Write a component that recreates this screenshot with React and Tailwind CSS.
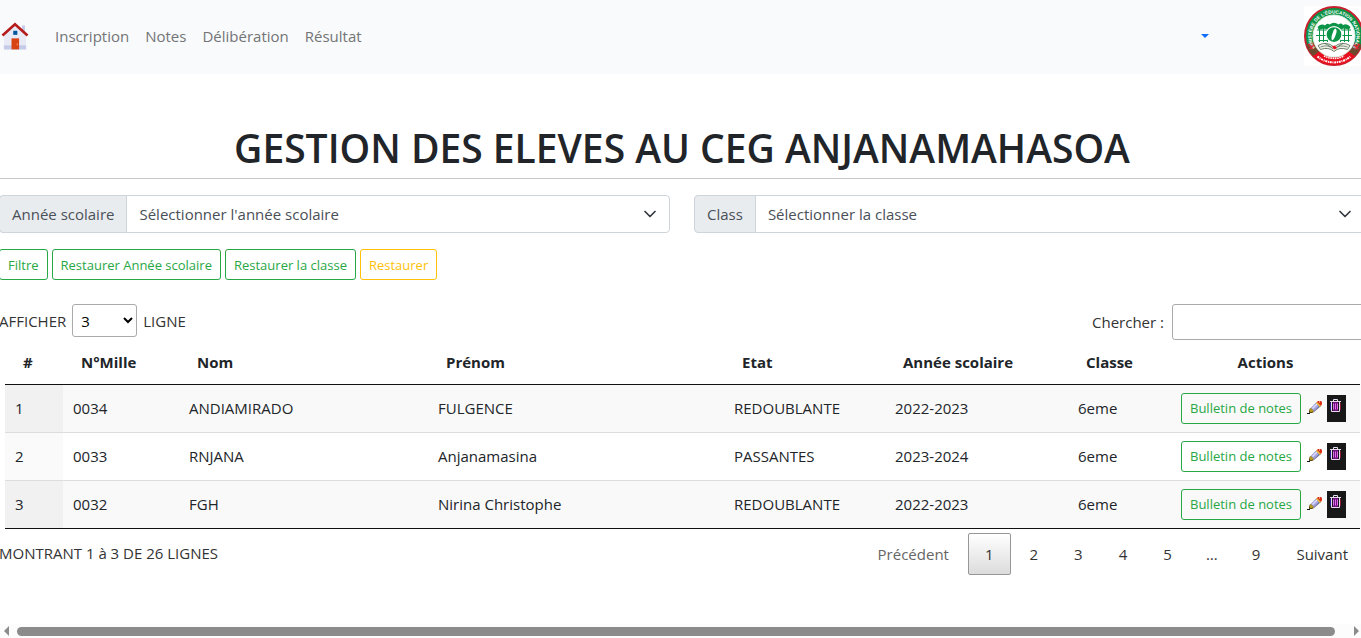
const students = [
  { id: 1, mille: "0034", nom: "ANDIAMIRADO", prenom: "FULGENCE", etat: "REDOUBLANTE", annee: "2022-2023", classe: "6eme" },
  { id: 2, mille: "0033", nom: "RNJANA", prenom: "Anjanamasina", etat: "PASSANTES", annee: "2023-2024", classe: "6eme" },
  { id: 3, mille: "0032", nom: "FGH", prenom: "Nirina Christophe", etat: "REDOUBLANTE", annee: "2022-2023", classe: "6eme" },
];

const navLinks = ["Inscription", "Notes", "Délibération", "Résultat"];
const headings = ["#", "N°Mille", "Nom", "Prénom", "Etat", "Année scolaire", "Classe"];

function HouseIcon() {
  return (
    <svg className="h-7 w-7" viewBox="0 0 48 48" aria-hidden="true">
      <path fill="#c5cae9" d="M36 6h5v14h-5z" />
      <path fill="#e8eaf6" d="M43 47H5V21L24 4l19 17z" />
      <path fill="#c5cae9" d="M5 40h38v7H5z" />
      <path fill="#b71c1c" d="M24 1 1 21.500l3 3.300L24 7l20 17.800 3-3.300z" />
      <path fill="#d84315" d="M18 28h13v19H18z" />
      <path fill="#01579b" d="M21 15h7v7h-7z" />
      <path fill="#ff8a65" d="M27 37h2v3h-2z" />
    </svg>
  );
}

function MinistryLogo() {
  return (
    <svg className="h-15 w-15 bg-white" viewBox="0 0 120 120" role="img" aria-label="Ministère de l'Éducation Nationale">
      <defs>
        <path id="ring" d="M60 105a45 45 0 0 1 0-90a45 45 0 0 1 0 90" />
      </defs>
      <circle cx="60" cy="60" r="58" fill="#0b9347" stroke="#c8202f" strokeWidth="4" />
      <path d="M4 77a58 58 0 0 0 14 23l13-10a43 43 0 0 1-11-18zM116 77a58 58 0 0 1-14 23l-13-10a43 43 0 0 0 11-18z" fill="#6d4a2e" />
      <path d="M18 100A58 58 0 0 0 102 100L89 90A42 42 0 0 1 31 90z" fill="#e8101f" />
      <circle cx="60" cy="60" r="42" fill="#fff" stroke="#dff3e6" strokeWidth="2" />
      <text fill="#fff" fontSize="9.500" fontWeight="700" fontFamily="Liberation Sans Narrow, Liberation Sans, sans-serif">
        <textPath href="#ring" startOffset="50%" textAnchor="middle">MINISTÈRE DE L'ÉDUCATION NATIONALE</textPath>
      </text>
      <path d="M27 42q8-8 15-3 4-6 9-2 9-7 18 0 5-4 9 1 8-4 15 4l-3 5-10-2-8 2-12-3-12 3-9-2-9 3z" fill="#0b9347" />
      <path d="M26 48h68M24 59h72M29 69h20m22 0h20M31 42v30M39 42v30M47 42v30M73 42v30M81 42v30M89 42v30" stroke="#0b9347" strokeWidth="2" fill="none" />
      <circle cx="60" cy="57" r="16" fill="#0b9347" stroke="#fff" strokeWidth="2.500" />
      <path d="M63 45c4 3 2 9 0 14s-5 11-7 9-1-8 1-13 2-9 6-10z" fill="#fff" />
      <path d="M28 79q17-10 32 3 15-13 32-3l-5 8q-16-6-27 4-11-10-27-4z" fill="#f1efe7" stroke="#71836d" strokeWidth="2" />
      <path d="M33 82q16-6 25 4m29-4q-16-6-25 4M42 75l14 8m22-8-14 8" stroke="#4f7059" strokeWidth="1.500" fill="none" />
      <path d="M56 81l5-2 5 5-6 3z" fill="#e8101f" />
      <path d="M40 100a44 44 0 0 0 40 0" fill="none" stroke="#fff" strokeWidth="3" strokeDasharray="3 1.500" />
      <path d="M27 101a52 52 0 0 0 66 0" fill="none" stroke="#fff" strokeWidth="4" strokeDasharray="4 1.500 2 1.500" />
      <path d="M9 76l8 10m-6 0 9-8M111 76l-8 10m6 0-9-8" stroke="#db2935" strokeWidth="3" />
    </svg>
  );
}

function PencilIcon() {
  return (
    <svg className="h-4 w-4" viewBox="0 0 16 16" aria-hidden="true">
      <path fill="#111" d="M0 14h1v-1h3v-1h1v1H4v1z" />
      <path fill="#5d4b18" d="M3 13v-2l1-3 4 4-2 1z" />
      <path fill="#6d6b92" d="m4 9 7-7 4 4-7 6z" />
      <path fill="#b59a18" d="M4 12V9l1-1 3 3-2 1z" />
      <path fill="#a8a5de" d="m5 8 5-5 3 3-5 5z" />
      <path fill="#dcdcff" d="m6 8 5-5 1 1-5 5z" />
      <path fill="#f2bd20" d="m10 3 1-1 4 4-1 1z" />
      <path fill="#dc3014" d="m11 2 1-1h3l1 1v2l-1 2z" />
      <path fill="#ff8a70" d="M13 1h1v2h-1z" />
    </svg>
  );
}

function TrashIcon() {
  return (
    <svg className="h-[14px] w-[13px]" viewBox="0 0 13 14" fill="none" aria-hidden="true">
      <path d="M4 3h5v9H4z" fill="#721080" />
      <path d="M1 2.500h11M4.500 2V.500h4V2M2.500 3v9.500h8V3" stroke="#eadcf0" />
      <path d="M4.500 4.500v6m2-6v6m2-6v6" stroke="#dc70e6" />
      <path d="M1.500 4v7" stroke="#2613a0" />
      <path d="M11.500 4v7" stroke="#8b1838" />
    </svg>
  );
}

function FilterSelect({ id, label, placeholder }) {
  return (
    <div className="flex h-[38px]">
      <label htmlFor={id} className="flex items-center whitespace-nowrap rounded-l border border-[#ced4da] bg-[#e9ecef] px-3 text-[#495057]">
        {label}
      </label>
      <div className="relative -ml-px grow">
        <select id={id} className="h-full w-full appearance-none rounded-r border border-[#ced4da] bg-white pl-3 pr-9 text-[#495057]">
          <option>{placeholder}</option>
        </select>
        <svg className="pointer-events-none absolute right-3 top-[11px] h-4 w-4" viewBox="0 0 16 16" fill="none" stroke="#343a40" strokeWidth="1.700" strokeLinecap="round" strokeLinejoin="round" aria-hidden="true">
          <path d="m3 5.500 5 5 5-5" />
        </svg>
      </div>
    </div>
  );
}

function OutlineButton({ children, tone = "green" }) {
  const color = tone === "green" ? "border-[#28a745] text-[#28a745]" : "border-[#ffc107] text-[#ffc107]";
  return (
    <button type="button" className={`h-[31px] whitespace-nowrap rounded-[3px] border px-2 text-[13px] ${color}`}>
      {children}
    </button>
  );
}

function PageButton({ children, current }) {
  const look = current
    ? "border-[#979797] bg-linear-to-b from-white to-[#dcdcdc]"
    : "border-transparent";
  return (
    <button type="button" aria-current={current ? "page" : undefined} className={`h-[42px] min-w-[42px] rounded-[2px] border px-4 text-[#333] ${look}`}>
      {children}
    </button>
  );
}

export default function App() {
  return (
    <div className="flex min-h-screen flex-col overflow-hidden bg-white font-['Open_Sans','Noto_Sans',sans-serif] text-[15px] leading-6 text-[#212529]">
      <div className="-ml-px w-[calc(100%+5px)]">
        <header className="flex items-center bg-[#f8fafc] pb-2 pl-[2px] pr-px pt-[6px]">
          <a href="#accueil" aria-label="Accueil"><HouseIcon /></a>
          <nav className="ml-[26px] flex gap-4">
            {navLinks.map((link) => (
              <a key={link} href={`#${link}`} className="text-[#737475]">{link}</a>
            ))}
          </nav>
          <button type="button" aria-label="Compte" className="ml-auto mr-[95px] flex h-6 w-2 items-center">
            <svg className="h-1 w-2" viewBox="0 0 8 4" aria-hidden="true"><path d="M0 0h8L4 4z" fill="#0d6efd" /></svg>
          </button>
          <MinistryLogo />
        </header>

        <main>
          <h1 className="mt-[50px] text-center text-[39px] font-semibold leading-[48px]">GESTION DES ELEVES AU CEG ANJANAMAHASOA</h1>
          <hr className="mt-[6px] border-[#c8c9ca]" />

          <div className="mt-4 grid grid-cols-2 gap-6">
            <FilterSelect id="annee" label="Année scolaire" placeholder="Sélectionner l'année scolaire" />
            <FilterSelect id="classe" label="Class" placeholder="Sélectionner la classe" />
          </div>

          <div className="mt-4 flex gap-1">
            <OutlineButton>Filtre</OutlineButton>
            <OutlineButton>Restaurer Année scolaire</OutlineButton>
            <OutlineButton>Restaurer la classe</OutlineButton>
            <OutlineButton tone="yellow">Restaurer</OutlineButton>
          </div>

          <div className="mt-6 flex items-start justify-between text-[#333]">
            <label className="flex items-center gap-[6px]">
              AFFICHER
              <select className="h-[33px] w-[65px] rounded-[3px] border border-[#aaa] bg-transparent p-1 text-black">
                <option>3</option>
                <option>10</option>
                <option>25</option>
              </select>
              LIGNE
            </label>
            <label className="flex items-center gap-2">
              Chercher :
              <input type="search" className="h-9 w-[193px] rounded-[3px] border border-[#aaa] px-1" />
            </label>
          </div>

          <div className="pl-[6px] pr-[5px]">
            <table className="w-full table-fixed border-b border-[#111]">
              <colgroup>
                <col className="w-[58px]" />
                <col className="w-[116px]" />
                <col className="w-[249px]" />
                <col className="w-[296px]" />
                <col className="w-[161px]" />
                <col className="w-[183px]" />
                <col className="w-[103px]" />
                <col className="w-[189px]" />
              </colgroup>
              <thead>
                <tr className="h-11 border-b border-[#111] text-left">
                  {headings.map((h) => (
                    <th key={h} scope="col" className="whitespace-nowrap px-[18px] font-bold">{h}</th>
                  ))}
                  <th scope="col" className="text-center font-bold">Actions</th>
                </tr>
              </thead>
              <tbody>
                {students.map((s) => (
                  <tr key={s.id} className="group h-12 border-b border-[#ddd] odd:bg-[#f9f9f9] last:border-b-0">
                    <td className="px-[10px] group-odd:bg-[#f1f1f1] group-even:bg-[#fafafa]">{s.id}</td>
                    <td className="px-[10px]">{s.mille}</td>
                    <td className="px-[10px]">{s.nom}</td>
                    <td className="px-[10px]">{s.prenom}</td>
                    <td className="px-[10px]">{s.etat}</td>
                    <td className="px-[10px]">{s.annee}</td>
                    <td className="px-[10px]">{s.classe}</td>
                    <td className="px-[10px]">
                      <div className="flex items-center gap-[5px]">
                        <OutlineButton>Bulletin de notes</OutlineButton>
                        <button type="button" aria-label="Modifier"><PencilIcon /></button>
                        <button type="button" aria-label="Supprimer" className="flex h-[27px] w-[19px] items-start bg-[#181818] pl-[2px] pt-1"><TrashIcon /></button>
                      </div>
                    </td>
                  </tr>
                ))}
              </tbody>
            </table>
          </div>

          <div className="flex justify-between pt-1 text-[#333]">
            <p className="pt-2">MONTRANT 1 à 3 DE 26 LIGNES</p>
            <nav aria-label="Pagination" className="flex gap-[2px]">
              <button type="button" disabled className="h-[42px] px-[17px] text-[#666]">Précédent</button>
              <PageButton current>1</PageButton>
              <PageButton>2</PageButton>
              <PageButton>3</PageButton>
              <PageButton>4</PageButton>
              <PageButton>5</PageButton>
              <span className="flex w-[42px] items-center justify-center">…</span>
              <PageButton>9</PageButton>
              <PageButton>Suivant</PageButton>
            </nav>
          </div>
        </main>
      </div>

      <div className="mt-auto flex h-[14px] items-center bg-[#fcfcfc] pl-1" aria-hidden="true">
        <svg className="h-[10px] w-[5px]" viewBox="0 0 5 10"><path d="M5 0v10L0 5z" fill="#8b8b8b" /></svg>
        <div className="ml-2 mr-[19px] h-[9px] grow rounded-full bg-[#8b8b8b]" />
        <svg className="mr-[2px] h-[10px] w-[5px]" viewBox="0 0 5 10"><path d="M0 0v10l5-5z" fill="#8b8b8b" /></svg>
      </div>
    </div>
  );
}
